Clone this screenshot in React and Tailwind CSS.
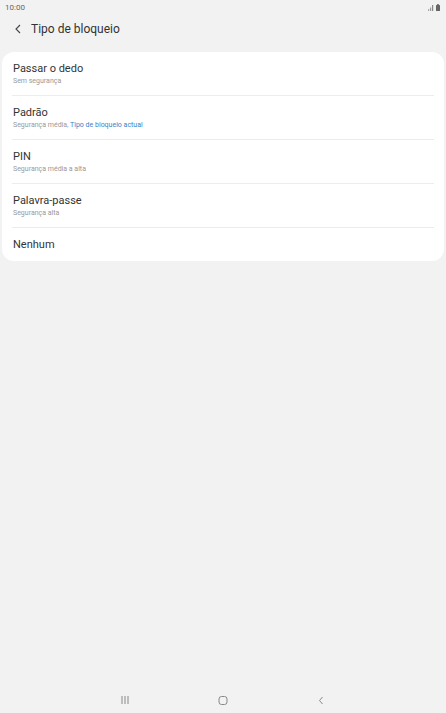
import React from 'react';

const options = [
  { title: 'Passar o dedo', sub: 'Sem segurança' },
  { title: 'Padrão', sub: 'Segurança média, ', current: 'Tipo de bloqueio actual' },
  { title: 'PIN', sub: 'Segurança média a alta' },
  { title: 'Palavra-passe', sub: 'Segurança alta' },
  { title: 'Nenhum' },
];

const StatusBar = () => (
  <div className="h-[14px] flex items-center justify-between px-[5px] pt-[1px] text-[8px] text-[#666]">
    <span>10:00</span>
    <div className="flex items-end gap-[2px] pr-[1px]">
      <svg width="6" height="6" viewBox="0 0 6 6">
        <rect x="0" y="4" width="1.2" height="2" fill="#aaa" />
        <rect x="2" y="2.5" width="1.2" height="3.5" fill="#999" />
        <rect x="4" y="0" width="1.2" height="6" fill="#888" />
      </svg>
      <svg width="4" height="7" viewBox="0 0 4 7">
        <rect x="1.2" y="0" width="1.6" height="1" fill="#666" />
        <rect x="0" y="1" width="4" height="6" rx="0.5" fill="#666" />
      </svg>
    </div>
  </div>
);

const App = () => {
  return (
    <div className="w-[446px] h-[713px] bg-[#f2f2f2] flex flex-col font-['Roboto',sans-serif]">
      <StatusBar />

      {/* header */}
      <div className="h-[30px] flex items-center pl-[14px] gap-[9px]">
        <svg width="8" height="10" viewBox="0 0 8 10" fill="none">
          <path d="M6 1L2 5l4 4" stroke="#444" strokeWidth="1.1" />
        </svg>
        <span className="text-[12px] text-[#333]">Tipo de bloqueio</span>
      </div>

      {/* list card */}
      <div className="mt-[8px] mx-[2px] bg-white rounded-[12px] flex flex-col">
        {options.map((o, i) => (
          <div
            key={o.title}
            className={`mx-[10px] px-[1px] flex flex-col justify-center ${o.sub ? 'h-[44px]' : 'h-[33px]'} ${i < options.length - 1 ? 'border-b border-[#ececec]' : ''}`}
          >
            <span className="text-[11px] leading-[14px] text-[#333]">{o.title}</span>
            {o.sub && (
              <span className="text-[7px] leading-[10px] text-[#999]">
                {o.sub}
                {o.current && <span className="text-[#3a82c8]">{o.current}</span>}
              </span>
            )}
          </div>
        ))}
      </div>

      <div className="flex-1" />

      {/* nav bar */}
      <div className="h-[26px] flex items-center justify-center gap-[89px]">
        <svg width="8" height="8" viewBox="0 0 8 8">
          <rect x="0.5" y="0" width="1" height="8" fill="#888" />
          <rect x="3.5" y="0" width="1" height="8" fill="#888" />
          <rect x="6.5" y="0" width="1" height="8" fill="#888" />
        </svg>
        <svg width="10" height="9" viewBox="0 0 10 9" fill="none">
          <rect x="1" y="0.5" width="8" height="8" rx="2.5" stroke="#888" strokeWidth="1" />
        </svg>
        <svg width="8" height="9" viewBox="0 0 8 9" fill="none">
          <path d="M5.5 1L2.5 4.5l3 3.5" stroke="#888" strokeWidth="1" />
        </svg>
      </div>
    </div>
  );
};

export default App;
